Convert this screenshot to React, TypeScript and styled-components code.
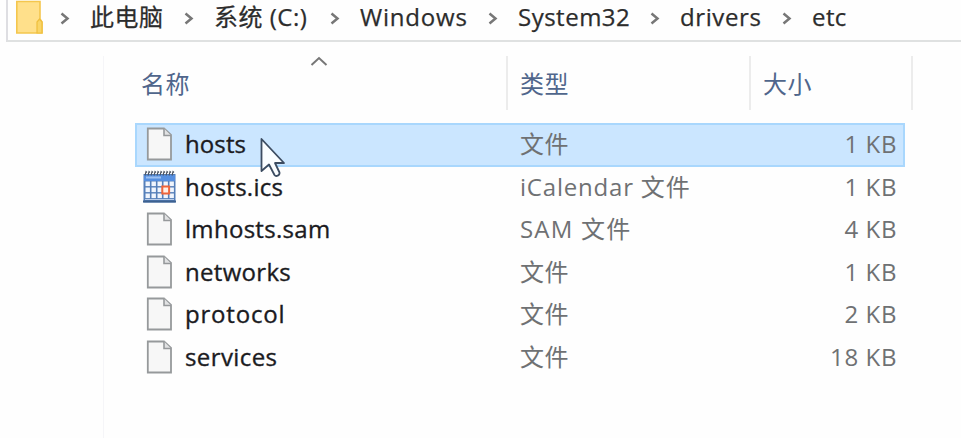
import React from 'react';
import styled, { createGlobalStyle } from 'styled-components';

const GlobalStyle = createGlobalStyle`
  html, body { margin: 0; padding: 0; background: #fefefe; overflow: hidden; }
  * { box-sizing: border-box; }
`;

const Explorer = styled.div`
  width: 961px;
  height: 438px;
  overflow: hidden;
  display: flex;
  flex-direction: column;
  background: #fefefe;
  font-family: 'Open Sans', 'Noto Sans CJK SC', sans-serif;
  font-size: 24px;
  line-height: 34px;
  white-space: nowrap;
`;

const AddressBar = styled.nav`
  flex: none;
  display: flex;
  align-items: flex-start;
  height: 42px;
  margin-left: 6px;
  padding-left: 7px;
  border-left: 2px solid #dedee2;
  border-bottom: 2px solid #dfe1e1;
  color: #2c2c2c;
  -webkit-text-stroke: 0.25px currentColor;
`;

const FolderSlot = styled.div`
  width: 45px;
  height: 34px;
`;

const Crumb = styled.span<{ $width: number; $spacing: number }>`
  flex: none;
  width: ${p => p.$width}px;
  letter-spacing: ${p => p.$spacing}px;
`;

const Separator = styled.svg`
  flex: none;
  width: 10px;
  height: 14px;
  margin: 12px 20px 0 0;
`;

const Body = styled.div`
  display: flex;
  flex: 1;
  padding-top: 14px;
`;

const NavPane = styled.aside`
  width: 104px;
  border-right: 1px solid #f5f5f8;
`;

const FileList = styled.main`
  width: 810px;
`;

const Header = styled.div`
  position: relative;
  display: grid;
  grid-template-columns: 404px 243px 162px;
  height: 54px;
  color: #50668c;
`;

const HeaderCell = styled.div<{ $inset: number }>`
  padding: 11px 0 0 ${p => p.$inset}px;
  letter-spacing: 0.5px;
  border-right: 2px solid #ececec;
`;

const SortArrow = styled.svg`
  position: absolute;
  left: 206px;
  top: 0;
`;

const Rows = styled.div`
  margin: 13px 0 0 31px;
  width: 770px;
`;

const Row = styled.div<{ $selected?: boolean }>`
  position: relative;
  display: grid;
  grid-template-columns: 50px 335px 270px 107px;
  height: ${p => (p.$selected ? 44 : 42.6)}px;
  margin-bottom: ${p => (p.$selected ? -1.4 : 0)}px;
  align-items: start;
  padding-top: 4px;
  color: #6f7173;
  background: ${p => (p.$selected ? '#cbe6ff' : 'transparent')};
  box-shadow: ${p => (p.$selected ? 'inset 0 0 0 2px #a9d7fd' : 'none')};
`;

const IconCell = styled.div`
  display: flex;
  padding-left: 8px;
`;

const Cell = styled.div<{ $spacing?: number }>`
  letter-spacing: ${p => p.$spacing ?? 0}px;
`;

const Name = styled(Cell)`
  color: #1b1b1f;
  -webkit-text-stroke: 0.35px currentColor;
`;

const Size = styled(Cell)`
  text-align: right;
`;

const Pointer = styled.svg`
  position: absolute;
  left: 125px;
  top: 14px;
  z-index: 1;
`;

const FolderIcon = () => (
  <svg width="28" height="34" viewBox="0 0 28 34">
    <path d="M1.8 1.5H25V19L27 22V33H1.8Z" fill="#ffe08b" stroke="#f4c64e" strokeWidth="1.6" />
    <path d="M22 33V22L24.5 19L27 22V33Z" fill="#f9d568" stroke="#efbf3d" strokeWidth="1.2" />
  </svg>
);

const Chevron = () => (
  <Separator viewBox="0 0 10 14">
    <path d="M1.5 1.5L7.5 6.5L1.5 11.5" fill="none" stroke="#777" strokeWidth="2.5" />
  </Separator>
);

const DocumentIcon = () => (
  <svg width="32" height="34" viewBox="0 0 32 34">
    <path d="M4.8 1.5H21L28 8V32.5H4.8Z" fill="#f7f7f7" stroke="#96999b" strokeWidth="1.8" />
    <path d="M21 1.5V8.5H28" fill="#e1e2e3" stroke="#96999b" strokeWidth="1.6" />
  </svg>
);

const CalendarIcon = () => (
  <svg width="33" height="34" viewBox="0 0 33 34">
    <rect x="0.5" y="4" width="32" height="28.5" fill="#557fb9" />
    <rect x="1" y="5" width="31" height="6" fill="#568fe0" />
    <path d="M3 7.5H18" stroke="#9cc0f2" strokeWidth="2" />
    <path d="M0 31.5H33" stroke="#3d618f" strokeWidth="2" />
    {[11.5, 17.5, 23.5].map(y =>
      [2.5, 8.5, 14.5, 20.5, 26.5].map(x => (
        <rect key={`${x}-${y}`} x={x} y={y} width="4.4" height="4.6" fill="#f0f5fd" />
      )),
    )}
    <path d="M2 29.5H31" stroke="#b9cce8" strokeWidth="1" />
    <rect x="19.3" y="16.5" width="6.8" height="7" fill="#fff0e7" stroke="#ee653b" strokeWidth="2" />
    {[2, 5, 8, 11, 14, 17, 20, 23, 26, 29].map(x => (
      <path key={x} d={`M${x} 5.5L${x + 1} 1.5L${x + 2} 2.5`} fill="none" stroke="#4b5360" strokeWidth="1.1" />
    ))}
  </svg>
);

const crumbs = [
  { label: '此电脑', width: 94, spacing: 0.5 },
  { label: '系统 (C:)', width: 116, spacing: 0.5 },
  { label: 'Windows', width: 128, spacing: 0.8 },
  { label: 'System32', width: 132, spacing: 0.5 },
  { label: 'drivers', width: 102, spacing: 0.6 },
  { label: 'etc', width: 60, spacing: 0.4 },
];

const files = [
  { name: 'hosts', type: '文件', size: '1 KB', spacing: 0.1, typeSpacing: 0.5 },
  { name: 'hosts.ics', type: 'iCalendar 文件', size: '1 KB', spacing: 0.25, typeSpacing: 0.8 },
  { name: 'lmhosts.sam', type: 'SAM 文件', size: '4 KB', spacing: 0.3, typeSpacing: 1.2 },
  { name: 'networks', type: '文件', size: '1 KB', spacing: 0.3, typeSpacing: 0.5 },
  { name: 'protocol', type: '文件', size: '2 KB', spacing: 0.8, typeSpacing: 0.5 },
  { name: 'services', type: '文件', size: '18 KB', spacing: 0.4, typeSpacing: 0.5 },
];

export default function App() {
  return (
    <Explorer>
      <GlobalStyle />
      <AddressBar>
        <FolderSlot><FolderIcon /></FolderSlot>
        {crumbs.map(c => (
          <React.Fragment key={c.label}>
            <Chevron />
            <Crumb $width={c.width} $spacing={c.spacing}>{c.label}</Crumb>
          </React.Fragment>
        ))}
      </AddressBar>
      <Body>
        <NavPane />
        <FileList>
          <Header>
            <HeaderCell $inset={37}>名称</HeaderCell>
            <HeaderCell $inset={12}>类型</HeaderCell>
            <HeaderCell $inset={12}>大小</HeaderCell>
            <SortArrow width="18" height="12" viewBox="0 0 18 12">
              <path d="M1.5 9L9 2L16.5 9" fill="none" stroke="#777" strokeWidth="2" />
            </SortArrow>
          </Header>
          <Rows>
            {files.map((f, i) => (
              <Row key={f.name} $selected={i === 0}>
                <IconCell>{f.name.endsWith('.ics') ? <CalendarIcon /> : <DocumentIcon />}</IconCell>
                <Name $spacing={f.spacing}>{f.name}</Name>
                <Cell $spacing={f.typeSpacing}>{f.type}</Cell>
                <Size $spacing={0.6}>{f.size}</Size>
                {i === 0 && (
                  <Pointer width="26" height="42" viewBox="0 0 26 42">
                    <path d="M1.5 2V34L9 27.5L14.5 38C16 40 20 38.5 19.5 35.5L15 26H24Z" fill="#fafdff" stroke="#3c4c61" strokeWidth="1.8" strokeLinejoin="round" />
                  </Pointer>
                )}
              </Row>
            ))}
          </Rows>
        </FileList>
      </Body>
    </Explorer>
  );
}
